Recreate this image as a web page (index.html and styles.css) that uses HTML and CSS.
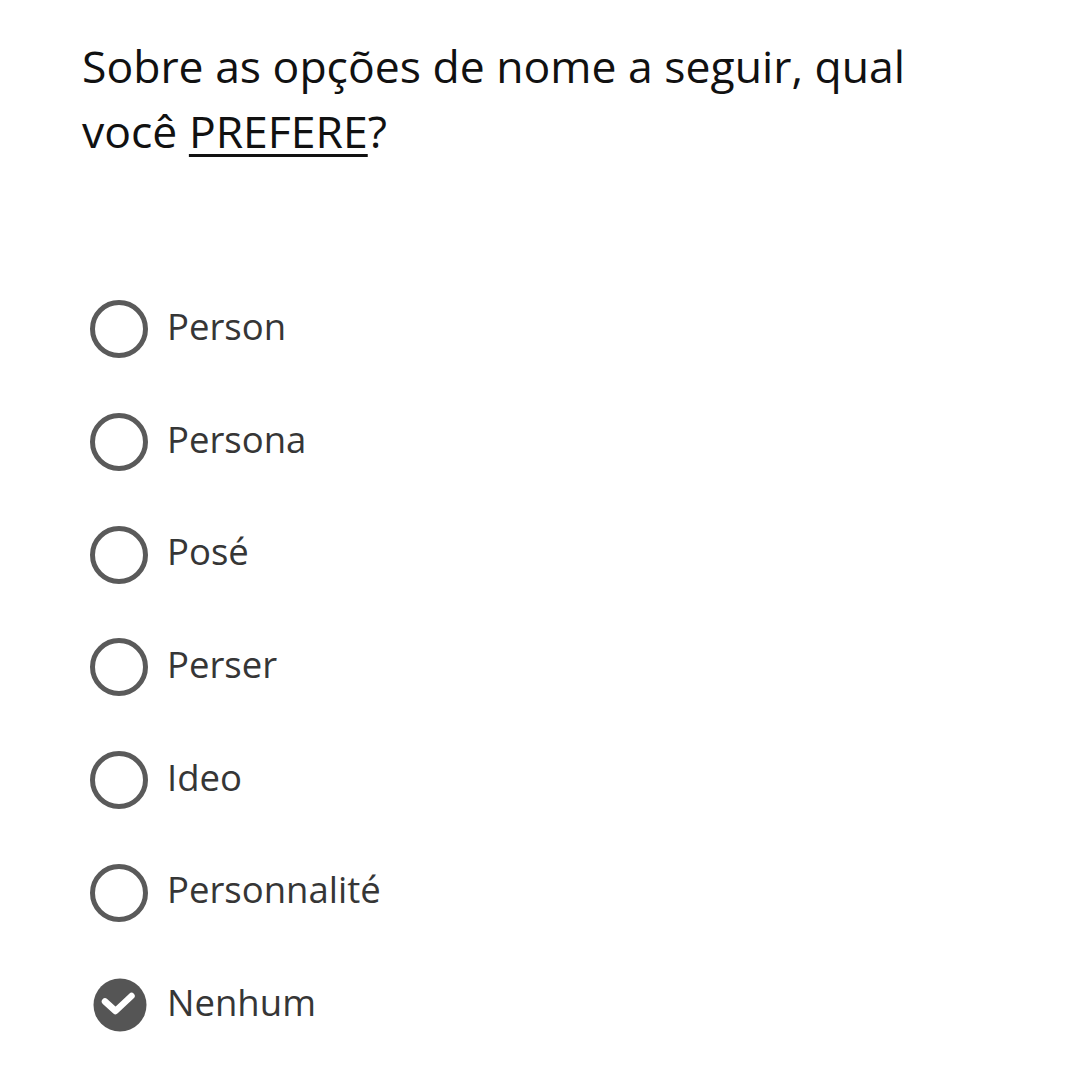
FILE: index.html
```html
<!DOCTYPE html>
<html lang="pt">
<head>
    <meta charset="utf-8">
    <title>Pesquisa</title>
    <link rel="stylesheet" href="styles.css">
</head>
<body>
    <div class="question">
        <h1 class="question-title">Sobre as opções de nome a seguir, qual você <u>PREFERE</u>?</h1>

        <ul class="options">
            <li class="option"><span class="radio"></span><span class="label">Person</span></li>
            <li class="option"><span class="radio"></span><span class="label">Persona</span></li>
            <li class="option"><span class="radio"></span><span class="label">Posé</span></li>
            <li class="option"><span class="radio"></span><span class="label">Perser</span></li>
            <li class="option"><span class="radio"></span><span class="label">Ideo</span></li>
            <li class="option"><span class="radio"></span><span class="label">Personnalité</span></li>
            <li class="option checked">
                <span class="radio">
                    <svg viewBox="0 0 58 58" width="58" height="58">
                        <circle cx="30" cy="29" r="26.5" fill="#555"/>
                        <path d="M15 25.5 L25.5 35 L41.5 20" fill="none" stroke="#fff" stroke-width="6.5" stroke-linecap="round" stroke-linejoin="round"/>
                    </svg>
                </span>
                <span class="label">Nenhum</span>
            </li>
        </ul>
    </div>
</body>
</html>
```

FILE: styles.css
```css
body {
    margin: 0;
    padding: 0;
    background: #fff;
    font-family: "Open Sans", "Noto Sans", sans-serif;
}

.question {
    padding: 33px 82px 0 82px;
}

.question-title {
    margin: 0;
    width: 880px;
    font-size: 44.5px;
    font-weight: 400;
    line-height: 65px;
    color: #111;
}

.question-title u {
    text-decoration-thickness: 3px;
    text-underline-offset: 6px;
}

.options {
    list-style: none;
    margin: 110px 0 0 0;
    padding: 0 0 0 8px;
}

.option {
    display: flex;
    align-items: center;
    gap: 19px;
    height: 112.7px;
}

.radio {
    box-sizing: border-box;
    width: 58px;
    height: 58px;
    border: 5px solid #5a5a5a;
    border-radius: 50%;
    flex-shrink: 0;
}

.option.checked .radio {
    border: none;
    border-radius: 0;
}

.radio svg {
    display: block;
}

.label {
    margin-bottom: 7px;
    font-size: 36.5px;
    color: #363636;
}
```
